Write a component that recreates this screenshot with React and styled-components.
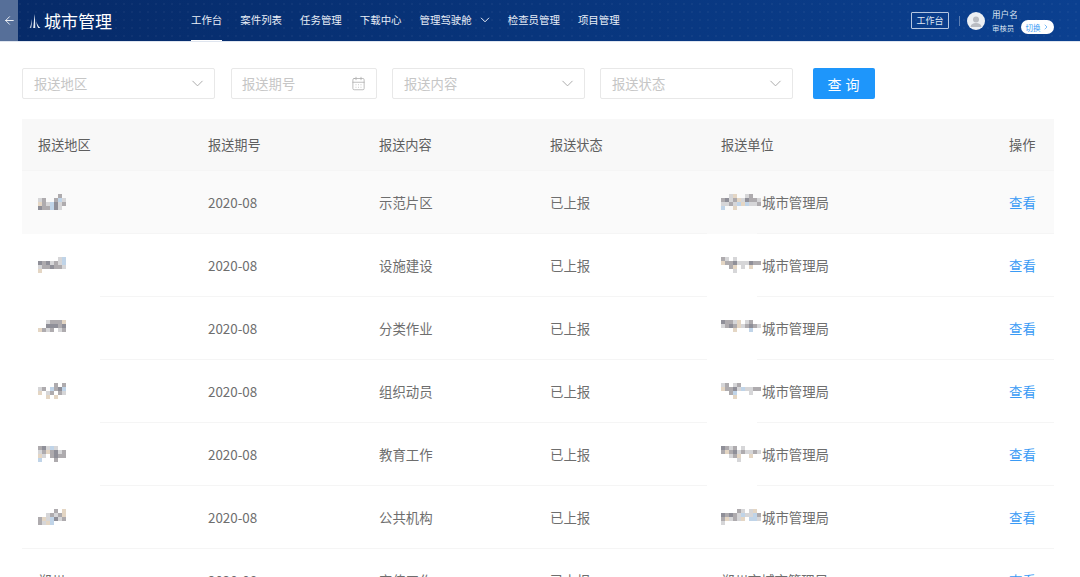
import React from 'react';
import styled, {createGlobalStyle} from 'styled-components';
import {ArrowLeft, ChevronDown, ChevronRight, CalendarDays} from 'lucide-react';

const Global = createGlobalStyle`
  html, body { margin: 0; padding: 0; background: #fff; overflow: hidden; }
  body { font-family: "Noto Sans CJK SC", "Noto Sans", sans-serif; }
  * { box-sizing: border-box; }
`;

const Page = styled.div`
  width: 1080px;
  height: 577px;
  overflow: hidden;
  background: #fff;
`;

//====================================
const Header = styled.header`
  display: flex;
  align-items: center;
  height: 42px;
  color: #fff;
  background-color: #0a3a82;
  background-image:
    radial-gradient(rgba(255,255,255,.08) .6px, transparent .8px),
    linear-gradient(90deg, #062a68 0%, #08357c 50%, #0b4090 100%);
  background-size: 8px 8px, 100% 100%;
  border-bottom: 1px solid #dfe5ef;
`;

const Back = styled.div`
  display: flex;
  align-items: center;
  justify-content: center;
  align-self: stretch;
  width: 18px;
  background: #566f99;
`;

const Logo = styled.div`
  display: flex;
  align-items: center;
  gap: 3px;
  width: 173px;
  padding-left: 11px;
`;

const LogoText = styled.span`
  font-size: 17px;
  line-height: 20px;
  font-weight: 400;
`;

const Nav = styled.nav`
  display: flex;
  align-self: stretch;
  gap: 18px;
`;

const NavItem = styled.div`
  display: flex;
  align-items: center;
  gap: 8px;
  padding-bottom: 1px;
  font-size: 10.45px;
  white-space: nowrap;
  color: #e9eef7;
  border-bottom: 1px solid ${p => (p.$active ? '#fff' : 'transparent')};
`;

const Right = styled.div`
  display: flex;
  align-items: center;
  margin-left: auto;
  padding-right: 26px;
`;

const WorkBtn = styled.div`
  display: flex;
  align-items: center;
  justify-content: center;
  width: 38px;
  height: 17px;
  font-size: 9px;
  color: #dfe7f3;
  border: 1px solid #b5c6e0;
  border-radius: 1px;
`;

const Divider = styled.div`
  width: 1px;
  height: 10px;
  margin: 0 7px 0 10px;
  background: #5d7fb3;
`;

const Avatar = styled.div`
  display: flex;
  align-items: center;
  justify-content: center;
  width: 18px;
  height: 18px;
  margin-right: 7px;
  overflow: hidden;
  border-radius: 50%;
  background: #eceff3;
`;

const UserInfo = styled.div`
  display: flex;
  flex-direction: column;
  width: 29px;
`;

const UserName = styled.span`
  font-size: 8.6px;
  line-height: 14px;
  color: #d9e2f0;
`;

const UserRole = styled.span`
  font-size: 7.4px;
  line-height: 13px;
  color: #d9e2f0;
`;

const Switch = styled.div`
  display: flex;
  align-items: center;
  justify-content: center;
  gap: 1px;
  width: 33px;
  height: 14px;
  margin-top: 13px;
  font-size: 7.5px;
  color: #3a9bf5;
  background: #fff;
  border-radius: 7px;
`;

//====================================
const Filters = styled.div`
  display: flex;
  padding: 26px 0 20px 22px;
`;

const Field = styled.div`
  display: flex;
  align-items: center;
  justify-content: space-between;
  width: ${p => p.$w}px;
  height: 31px;
  margin-right: ${p => p.$mr}px;
  padding: 0 ${p => p.$pr}px 0 ${p => p.$pl}px;
  font-size: 13.3px;
  color: #c6c6c6;
  border: 1px solid #e8e8e8;
  border-radius: 2px;
`;

const QueryBtn = styled.button`
  width: 62px;
  height: 31px;
  padding: 0 0 0 3px;
  font-family: inherit;
  font-size: 14px;
  letter-spacing: 4px;
  color: #fff;
  background: #1e96fb;
  border: 0;
  border-radius: 2px;
`;

//====================================
const Table = styled.div`
  width: 1032px;
  margin-left: 22px;
`;

// the row line is left open where the blur of the screenshot ate it
const lineFull = 'linear-gradient(#f5f5f5, #f5f5f5)';
const lineOpen = 'linear-gradient(90deg, transparent 78px, #f5f5f5 78px, #f5f5f5 685px, transparent 685px, transparent 735px, #f5f5f5 735px)';

const Row = styled.div`
  display: grid;
  grid-template-columns: 170px 171px 171px 171px 1fr 45px;
  align-items: center;
  height: ${p => (p.$head ? 52 : 63)}px;
  padding: 0 0 1px 16px;
  font-size: 13.4px;
  color: #6e6e6e;
  background-color: ${p => (p.$head ? '#f8f8f8' : p.$shade ? '#fafafa' : '#fff')};
  background-image: ${p => (p.$open ? lineOpen : lineFull)};
  background-repeat: no-repeat;
  background-position: bottom;
  background-size: 100% 1px;
`;

const HeadCell = styled.div`
  font-size: 13.2px;
  color: #5f5f5f;
`;

const Cell = styled.div`
  display: flex;
  align-items: center;
  gap: ${p => p.$gap || 0}px;
  white-space: nowrap;
`;

const Link = styled.a`
  color: #3a9bf5;
`;

// blurred-out place names in the screenshot
const tones = {d: '#8f8f98', m: '#aeabae', l: '#d6d6d8', b: '#c0d4e8', t: '#e4d6c4'};

function Mosaic({rows}) {
  return (
    <svg width={rows[0].length * 4} height={rows.length * 4} style={{display: 'block', filter: 'blur(.6px)'}}>
      {rows.map((line, y) => line.split('').map((c, x) => (
        tones[c] ? <rect key={x + '-' + y} x={x * 4} y={y * 4} width="4" height="4" fill={tones[c]} /> : null
      )))}
    </svg>
  );
}

const rows = [
  {
    content: '示范片区',
    city: ['.....m.', 'lm..mbl', 'tmlbdlm', 'dmmbdl.'],
    unit: ['..lt..lm..', 'mdlmtldmml', 'llmlbtbllm', 'b..t......'],
  },
  {
    content: '设施建设',
    city: ['.....lb', 'dmdlmlb', 'lmmdmml', 't......'],
    unit: ['ml.l......', 'tmmdllldmm', '..mt.l.t..', '...l......'],
  },
  {
    content: '分类作业',
    city: ['..lmmmt', '..dddmd', 'tmlm.lm', '.......'],
    unit: ['dmmlt.lm..', 'lmdmtlmdml', '...t...b..', '..........'],
  },
  {
    content: '组织动员',
    city: ['....m.m', 'lm.bmdb', 't.lm.ml', '..t.t..'],
    unit: ['lm.lm.....', 'tmmdlbllmm', '..mb...l..', '...t......'],
  },
  {
    content: '教育工作',
    city: ['mdlbl..', 'lmtmdlm', 'tl.mdmm', 'b...m..'],
    unit: ['dmlm.l....', 'mtmdlmllml', '..lmt..t..', '....l.....'],
  },
  {
    content: '公共机构',
    city: ['....m.t', '..lmlmt', 'mtlbdlm', 'mltb...'],
    unit: ['....ml.lt.', 'dmdmlbllbm', 'mtlmlt.bbl', 'l.........'],
  },
  {content: '宣传工作', cityName: '郑州', org: '郑州市城市管理局'},
];

const navItems = ['案件列表', '任务管理', '下载中心'];

export default function App() {
  return (
    <Page>
      <Global />
      <Header>
        <Back><ArrowLeft size={13} strokeWidth={1.6} color="#fff" /></Back>
        <Logo>
          <svg width="12" height="14" viewBox="0 0 12 14" fill="#e8edf5">
            <path d="M2.800 5c.4 3 .2 6-.6 9H.6C2 11 2.600 8 2.800 5z" opacity=".8" />
            <path d="M5.200 0c.8 4 1.200 9 1 14H4.200c.5-4 1-9 1-14z" />
            <path d="M7.400 7c.6 3 2 5.500 4.100 7H9.200C8 12 7.500 10 7.400 7z" />
          </svg>
          <LogoText>城市管理</LogoText>
        </Logo>
        <Nav>
          <NavItem $active>工作台</NavItem>
          {navItems.map(t => <NavItem key={t}>{t}</NavItem>)}
          <NavItem>
            管理驾驶舱
            <svg width="10" height="6" viewBox="0 0 10 6" fill="none" stroke="#e9eef7" strokeWidth="1">
              <path d="M1 .8l4 4 4-4" />
            </svg>
          </NavItem>
          <NavItem>检查员管理</NavItem>
          <NavItem>项目管理</NavItem>
        </Nav>
        <Right>
          <WorkBtn>工作台</WorkBtn>
          <Divider />
          <Avatar>
            <svg width="18" height="18" viewBox="0 0 18 18" fill="#b9bcc2">
              <circle cx="9" cy="7.500" r="3" />
              <path d="M3.500 15c.5-3 2.500-4 5.500-4s5 1 5.500 4z" />
            </svg>
          </Avatar>
          <UserInfo>
            <UserName>用户名</UserName>
            <UserRole>审核员</UserRole>
          </UserInfo>
          <Switch>切换<ChevronRight size={8} /></Switch>
        </Right>
      </Header>

      <Filters>
        <Field $w={193} $mr={16} $pl={11} $pr={7}>报送地区<ChevronDown size={19} strokeWidth={1.2} color="#a8a8a8" /></Field>
        <Field $w={146} $mr={15} $pl={10} $pr={10}>报送期号<CalendarDays size={15} strokeWidth={1.2} color="#a8a8a8" /></Field>
        <Field $w={193} $mr={15} $pl={11} $pr={7}>报送内容<ChevronDown size={19} strokeWidth={1.2} color="#a8a8a8" /></Field>
        <Field $w={193} $mr={20} $pl={11} $pr={7}>报送状态<ChevronDown size={19} strokeWidth={1.2} color="#a8a8a8" /></Field>
        <QueryBtn>查询</QueryBtn>
      </Filters>

      <Table>
        <Row $head>
          <HeadCell>报送地区</HeadCell>
          <HeadCell>报送期号</HeadCell>
          <HeadCell>报送内容</HeadCell>
          <HeadCell>报送状态</HeadCell>
          <HeadCell>报送单位</HeadCell>
          <HeadCell>操作</HeadCell>
        </Row>
        {rows.map((r, i) => (
          <Row key={r.content} $shade={i === 0} $open={i < 5}>
            <Cell>{r.cityName || <Mosaic rows={r.city} />}</Cell>
            <Cell>2020-08</Cell>
            <Cell>{r.content}</Cell>
            <Cell>已上报</Cell>
            <Cell $gap={1}>
              {r.org || <><Mosaic rows={r.unit} /><span>城市管理局</span></>}
            </Cell>
            <Cell><Link>查看</Link></Cell>
          </Row>
        ))}
      </Table>
    </Page>
  );
}
